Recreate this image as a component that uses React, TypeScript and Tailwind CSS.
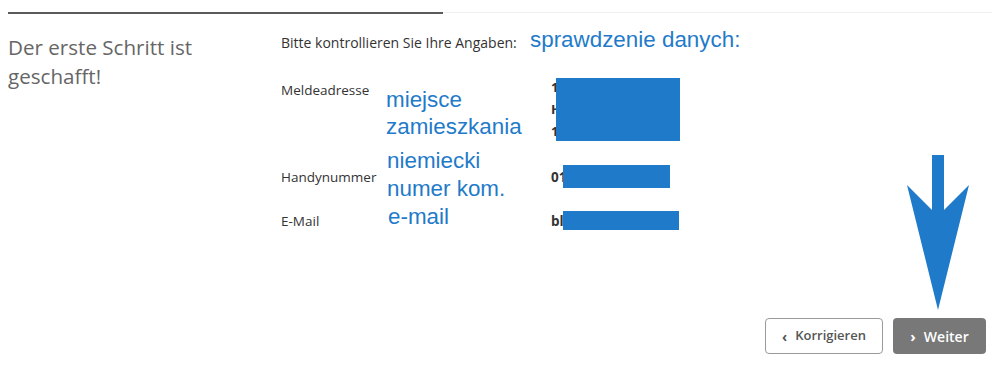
export default function App() {
  return (
    <div className="relative w-[1000px] h-[369px] bg-white overflow-hidden" style={{ fontFamily: '"Open Sans", sans-serif' }}>
      <div className="pt-3 px-2">
        <div className="flex h-[2px]">
          <div className="w-[435px] bg-[#5a5a5a]" />
          <div className="flex-1 bg-[#f0f0f0] h-px" />
        </div>
      </div>

      <div className="flex pl-2 pt-[19px]">
        <div className="w-[273px] text-[20.6px] leading-[29px] text-[#666] font-normal">
          Der erste Schritt ist
          <br />
          geschafft!
        </div>
        <div className="flex-1 text-[#333]">
          <div className="text-[14px] leading-[20px]">Bitte kontrollieren Sie Ihre Angaben:</div>
          <div className="grid grid-cols-[270px_1fr] text-[13.5px] mt-[27px]">
            <div className="leading-[18px] pt-[1px]">Meldeadresse</div>
            <div className="font-bold text-[13px] leading-[22px] -mt-[4px]">
              <div>1</div>
              <div>H</div>
              <div>1</div>
            </div>
            <div className="pt-[26px] leading-[18px]">Handynummer</div>
            <div className="pt-[26px] font-bold leading-[18px]">01</div>
            <div className="pt-[26px] leading-[18px]">E-Mail</div>
            <div className="pt-[26px] font-bold leading-[18px]">bl</div>
          </div>
        </div>
      </div>

      <div className="absolute left-[765px] top-[318px] flex gap-[10px]">
        <button className="w-[118px] h-[36px] rounded-[4px] border border-[#9a9a9a] bg-white text-[#555] text-[13px] font-semibold flex items-center justify-center gap-2">
          <span className="text-[14px] font-bold">‹</span>
          Korrigieren
        </button>
        <button className="w-[93px] h-[36px] rounded-[4px] bg-[#787878] text-white text-[14px] font-semibold flex items-center justify-center gap-2">
          <span className="text-[15px] font-bold">›</span>
          Weiter
        </button>
      </div>

      <div className="absolute inset-0 pointer-events-none text-[#1f7bc9]" style={{ fontFamily: '"Liberation Sans", Arial, sans-serif' }}>
        <div className="absolute left-[530px] top-[27px] text-[22.4px] leading-[26px]">sprawdzenie danych:</div>
        <div className="absolute left-[386px] top-[86px] text-[22.4px] leading-[27px]">
          miejsce
          <br />
          zamieszkania
        </div>
        <div className="absolute left-[387px] top-[147px] text-[22.4px] leading-[28px]">
          niemiecki
          <br />
          numer kom.
        </div>
        <div className="absolute left-[388px] top-[204px] text-[22.4px] leading-[26px]">e-mail</div>
        <div className="absolute left-[556px] top-[78px] w-[124px] h-[63px] bg-[#1f7bc9]" />
        <div className="absolute left-[563px] top-[165px] w-[107px] h-[23px] bg-[#1f7bc9]" />
        <div className="absolute left-[563px] top-[211px] w-[116px] h-[19px] bg-[#1f7bc9]" />
        <svg className="absolute left-0 top-0" width="1000" height="369">
          <polygon points="932,155 944,155 944,210 969,185 938,310 907,185 932,210" fill="#1f7bc9" />
        </svg>
      </div>
    </div>
  );
}
